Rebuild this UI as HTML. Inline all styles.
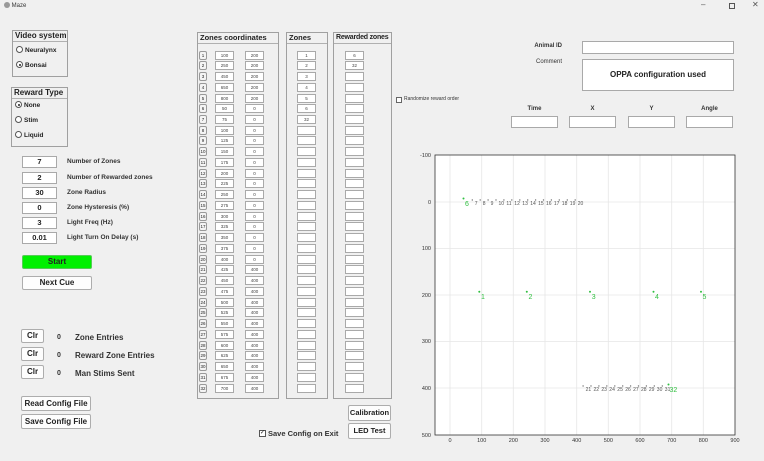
<!DOCTYPE html>
<html><head><meta charset="utf-8"><style>
*{box-sizing:border-box;margin:0;padding:0}
body{width:764px;height:461px;background:#f0f0f0;font-family:"Liberation Sans",sans-serif;position:relative;overflow:hidden;color:#222}
.a{position:absolute}
.tb{font-size:7px;color:#333}
.panel{position:absolute;border:1px solid #a0a0a0}
.ptitle{position:absolute;left:0;right:0;top:0;height:11px;border-bottom:1px solid #b0b0b0;font-weight:bold;font-size:8px;padding-left:2px;line-height:10px;white-space:nowrap;overflow:hidden}
.inp{position:absolute;background:#fff;border:1px solid #a9a9a9;text-align:center;font-weight:bold}
.lbl{position:absolute;font-size:6.5px;font-weight:bold;color:#333;white-space:nowrap}
.btn{position:absolute;background:#fdfdfd;border:1px solid #adadad;border-radius:2px;text-align:center;font-weight:bold;font-size:8px;white-space:nowrap}
.rad{position:absolute;font-size:6.5px;font-weight:bold;white-space:nowrap}
.rad i{display:inline-block;width:7px;height:7px;border:1px solid #555;border-radius:50%;vertical-align:-1px;margin-right:2px;background:#fff;position:relative}
.rad i.on::after{content:"";position:absolute;left:1.5px;top:1.5px;width:2px;height:2px;border-radius:50%;background:#222}
.rows{position:absolute;left:0;top:0}
.r{position:absolute;height:9px;font-size:4.5px;line-height:8px;text-align:center;background:#fff;border:1px solid #a9a9a9;color:#444}
.ix{position:absolute;height:9px;width:8px;font-size:4.5px;line-height:8px;text-align:center;border:1px solid #999;border-radius:2px;background:#f4f4f4}
</style></head><body>
<div class="a tb" style="left:4px;top:2px;font-size:6px"><span style="display:inline-block;width:6px;height:6px;border-radius:50%;background:#999;vertical-align:-1px"></span> Maze</div>
<div class="a" style="left:701px;top:0px;font-size:8px;color:#555">–</div>
<div class="a" style="left:729px;top:3px;width:6px;height:6px;border:1px solid #555"></div>
<div class="a" style="left:752px;top:0px;font-size:8px;color:#555">✕</div>

<div class="panel" style="left:12px;top:30px;width:56px;height:47px"><div class="ptitle" style="font-size:8px">Video system</div></div>
<div class="rad" style="left:16px;top:46px"><i></i>Neuralynx</div>
<div class="rad" style="left:16px;top:61px"><i class="on"></i>Bonsai</div>
<div class="panel" style="left:11px;top:87px;width:57px;height:60px"><div class="ptitle" style="font-size:8px">Reward Type</div></div>
<div class="rad" style="left:15px;top:101px"><i class="on"></i>None</div>
<div class="rad" style="left:15px;top:116px"><i></i>Stim</div>
<div class="rad" style="left:15px;top:131px"><i></i>Liquid</div>

<div class="inp" style="left:22px;top:156px;width:35px;height:12px;font-size:7.5px;line-height:10px">7</div><div class="lbl" style="left:67px;top:158px">Number of Zones</div>
<div class="inp" style="left:22px;top:172px;width:35px;height:12px;font-size:7.5px;line-height:10px">2</div><div class="lbl" style="left:67px;top:174px">Number of Rewarded zones</div>
<div class="inp" style="left:22px;top:187px;width:35px;height:12px;font-size:7.5px;line-height:10px">30</div><div class="lbl" style="left:67px;top:189px">Zone Radius</div>
<div class="inp" style="left:22px;top:202px;width:35px;height:12px;font-size:7.5px;line-height:10px">0</div><div class="lbl" style="left:67px;top:204px">Zone Hysteresis (%)</div>
<div class="inp" style="left:22px;top:217px;width:35px;height:12px;font-size:7.5px;line-height:10px">3</div><div class="lbl" style="left:67px;top:219px">Light Freq (Hz)</div>
<div class="inp" style="left:22px;top:232px;width:35px;height:12px;font-size:7.5px;line-height:10px">0.01</div><div class="lbl" style="left:67px;top:234px">Light Turn On Delay (s)</div>

<div class="btn" style="left:22px;top:255px;width:70px;height:14px;background:#00f000;border-color:#5c5;line-height:12px">Start</div>
<div class="btn" style="left:22px;top:276px;width:70px;height:14px;line-height:12px">Next Cue</div>
<div class="btn" style="left:21px;top:329px;width:23px;height:14px;line-height:11px">Clr</div>
<div class="btn" style="left:21px;top:347px;width:23px;height:14px;line-height:11px">Clr</div>
<div class="btn" style="left:21px;top:365px;width:23px;height:14px;line-height:11px">Clr</div>
<div class="lbl" style="left:57px;top:334px;font-size:7px">0</div><div class="lbl" style="left:75px;top:333px;font-size:8px">Zone Entries</div>
<div class="lbl" style="left:57px;top:352px;font-size:7px">0</div><div class="lbl" style="left:75px;top:351px;font-size:8px">Reward Zone Entries</div>
<div class="lbl" style="left:57px;top:370px;font-size:7px">0</div><div class="lbl" style="left:75px;top:369px;font-size:8px">Man Stims Sent</div>
<div class="btn" style="left:21px;top:396px;width:70px;height:15px;line-height:13px">Read Config File</div>
<div class="btn" style="left:21px;top:414px;width:70px;height:15px;line-height:13px">Save Config File</div>

<div class="panel" style="left:197px;top:32px;width:82px;height:367px"><div class="ptitle" style="font-size:7.5px">Zones coordinates</div></div>
<div class="panel" style="left:286px;top:32px;width:42px;height:367px"><div class="ptitle" style="font-size:7.5px">Zones</div></div>
<div class="panel" style="left:333px;top:32px;width:59px;height:367px"><div class="ptitle" style="font-size:7px;letter-spacing:-0.2px">Rewarded zones</div></div>

<div class="rows">
<div class="ix" style="left:199px;top:50.5px">1</div><div class="r" style="left:215px;top:50.5px;width:19px">100</div><div class="r" style="left:245px;top:50.5px;width:19px">200</div><div class="r" style="left:297px;top:50.5px;width:19px">1</div><div class="r" style="left:345px;top:50.5px;width:19px">6</div>
<div class="ix" style="left:199px;top:61.2px">2</div><div class="r" style="left:215px;top:61.2px;width:19px">250</div><div class="r" style="left:245px;top:61.2px;width:19px">200</div><div class="r" style="left:297px;top:61.2px;width:19px">2</div><div class="r" style="left:345px;top:61.2px;width:19px">32</div>
<div class="ix" style="left:199px;top:72px">3</div><div class="r" style="left:215px;top:72px;width:19px">450</div><div class="r" style="left:245px;top:72px;width:19px">200</div><div class="r" style="left:297px;top:72px;width:19px">3</div><div class="r" style="left:345px;top:72px;width:19px"></div>
<div class="ix" style="left:199px;top:82.7px">4</div><div class="r" style="left:215px;top:82.7px;width:19px">650</div><div class="r" style="left:245px;top:82.7px;width:19px">200</div><div class="r" style="left:297px;top:82.7px;width:19px">4</div><div class="r" style="left:345px;top:82.7px;width:19px"></div>
<div class="ix" style="left:199px;top:93.5px">5</div><div class="r" style="left:215px;top:93.5px;width:19px">800</div><div class="r" style="left:245px;top:93.5px;width:19px">200</div><div class="r" style="left:297px;top:93.5px;width:19px">5</div><div class="r" style="left:345px;top:93.5px;width:19px"></div>
<div class="ix" style="left:199px;top:104.2px">6</div><div class="r" style="left:215px;top:104.2px;width:19px">50</div><div class="r" style="left:245px;top:104.2px;width:19px">0</div><div class="r" style="left:297px;top:104.2px;width:19px">6</div><div class="r" style="left:345px;top:104.2px;width:19px"></div>
<div class="ix" style="left:199px;top:115px">7</div><div class="r" style="left:215px;top:115px;width:19px">75</div><div class="r" style="left:245px;top:115px;width:19px">0</div><div class="r" style="left:297px;top:115px;width:19px">32</div><div class="r" style="left:345px;top:115px;width:19px"></div>
<div class="ix" style="left:199px;top:125.7px">8</div><div class="r" style="left:215px;top:125.7px;width:19px">100</div><div class="r" style="left:245px;top:125.7px;width:19px">0</div><div class="r" style="left:297px;top:125.7px;width:19px"></div><div class="r" style="left:345px;top:125.7px;width:19px"></div>
<div class="ix" style="left:199px;top:136.4px">9</div><div class="r" style="left:215px;top:136.4px;width:19px">125</div><div class="r" style="left:245px;top:136.4px;width:19px">0</div><div class="r" style="left:297px;top:136.4px;width:19px"></div><div class="r" style="left:345px;top:136.4px;width:19px"></div>
<div class="ix" style="left:199px;top:147.2px">10</div><div class="r" style="left:215px;top:147.2px;width:19px">150</div><div class="r" style="left:245px;top:147.2px;width:19px">0</div><div class="r" style="left:297px;top:147.2px;width:19px"></div><div class="r" style="left:345px;top:147.2px;width:19px"></div>
<div class="ix" style="left:199px;top:157.9px">11</div><div class="r" style="left:215px;top:157.9px;width:19px">175</div><div class="r" style="left:245px;top:157.9px;width:19px">0</div><div class="r" style="left:297px;top:157.9px;width:19px"></div><div class="r" style="left:345px;top:157.9px;width:19px"></div>
<div class="ix" style="left:199px;top:168.7px">12</div><div class="r" style="left:215px;top:168.7px;width:19px">200</div><div class="r" style="left:245px;top:168.7px;width:19px">0</div><div class="r" style="left:297px;top:168.7px;width:19px"></div><div class="r" style="left:345px;top:168.7px;width:19px"></div>
<div class="ix" style="left:199px;top:179.4px">13</div><div class="r" style="left:215px;top:179.4px;width:19px">225</div><div class="r" style="left:245px;top:179.4px;width:19px">0</div><div class="r" style="left:297px;top:179.4px;width:19px"></div><div class="r" style="left:345px;top:179.4px;width:19px"></div>
<div class="ix" style="left:199px;top:190.1px">14</div><div class="r" style="left:215px;top:190.1px;width:19px">250</div><div class="r" style="left:245px;top:190.1px;width:19px">0</div><div class="r" style="left:297px;top:190.1px;width:19px"></div><div class="r" style="left:345px;top:190.1px;width:19px"></div>
<div class="ix" style="left:199px;top:200.9px">15</div><div class="r" style="left:215px;top:200.9px;width:19px">275</div><div class="r" style="left:245px;top:200.9px;width:19px">0</div><div class="r" style="left:297px;top:200.9px;width:19px"></div><div class="r" style="left:345px;top:200.9px;width:19px"></div>
<div class="ix" style="left:199px;top:211.6px">16</div><div class="r" style="left:215px;top:211.6px;width:19px">300</div><div class="r" style="left:245px;top:211.6px;width:19px">0</div><div class="r" style="left:297px;top:211.6px;width:19px"></div><div class="r" style="left:345px;top:211.6px;width:19px"></div>
<div class="ix" style="left:199px;top:222.4px">17</div><div class="r" style="left:215px;top:222.4px;width:19px">325</div><div class="r" style="left:245px;top:222.4px;width:19px">0</div><div class="r" style="left:297px;top:222.4px;width:19px"></div><div class="r" style="left:345px;top:222.4px;width:19px"></div>
<div class="ix" style="left:199px;top:233.1px">18</div><div class="r" style="left:215px;top:233.1px;width:19px">350</div><div class="r" style="left:245px;top:233.1px;width:19px">0</div><div class="r" style="left:297px;top:233.1px;width:19px"></div><div class="r" style="left:345px;top:233.1px;width:19px"></div>
<div class="ix" style="left:199px;top:243.8px">19</div><div class="r" style="left:215px;top:243.8px;width:19px">375</div><div class="r" style="left:245px;top:243.8px;width:19px">0</div><div class="r" style="left:297px;top:243.8px;width:19px"></div><div class="r" style="left:345px;top:243.8px;width:19px"></div>
<div class="ix" style="left:199px;top:254.6px">20</div><div class="r" style="left:215px;top:254.6px;width:19px">400</div><div class="r" style="left:245px;top:254.6px;width:19px">0</div><div class="r" style="left:297px;top:254.6px;width:19px"></div><div class="r" style="left:345px;top:254.6px;width:19px"></div>
<div class="ix" style="left:199px;top:265.3px">21</div><div class="r" style="left:215px;top:265.3px;width:19px">425</div><div class="r" style="left:245px;top:265.3px;width:19px">400</div><div class="r" style="left:297px;top:265.3px;width:19px"></div><div class="r" style="left:345px;top:265.3px;width:19px"></div>
<div class="ix" style="left:199px;top:276.1px">22</div><div class="r" style="left:215px;top:276.1px;width:19px">450</div><div class="r" style="left:245px;top:276.1px;width:19px">400</div><div class="r" style="left:297px;top:276.1px;width:19px"></div><div class="r" style="left:345px;top:276.1px;width:19px"></div>
<div class="ix" style="left:199px;top:286.8px">23</div><div class="r" style="left:215px;top:286.8px;width:19px">475</div><div class="r" style="left:245px;top:286.8px;width:19px">400</div><div class="r" style="left:297px;top:286.8px;width:19px"></div><div class="r" style="left:345px;top:286.8px;width:19px"></div>
<div class="ix" style="left:199px;top:297.5px">24</div><div class="r" style="left:215px;top:297.5px;width:19px">500</div><div class="r" style="left:245px;top:297.5px;width:19px">400</div><div class="r" style="left:297px;top:297.5px;width:19px"></div><div class="r" style="left:345px;top:297.5px;width:19px"></div>
<div class="ix" style="left:199px;top:308.3px">25</div><div class="r" style="left:215px;top:308.3px;width:19px">525</div><div class="r" style="left:245px;top:308.3px;width:19px">400</div><div class="r" style="left:297px;top:308.3px;width:19px"></div><div class="r" style="left:345px;top:308.3px;width:19px"></div>
<div class="ix" style="left:199px;top:319px">26</div><div class="r" style="left:215px;top:319px;width:19px">550</div><div class="r" style="left:245px;top:319px;width:19px">400</div><div class="r" style="left:297px;top:319px;width:19px"></div><div class="r" style="left:345px;top:319px;width:19px"></div>
<div class="ix" style="left:199px;top:329.8px">27</div><div class="r" style="left:215px;top:329.8px;width:19px">575</div><div class="r" style="left:245px;top:329.8px;width:19px">400</div><div class="r" style="left:297px;top:329.8px;width:19px"></div><div class="r" style="left:345px;top:329.8px;width:19px"></div>
<div class="ix" style="left:199px;top:340.5px">28</div><div class="r" style="left:215px;top:340.5px;width:19px">600</div><div class="r" style="left:245px;top:340.5px;width:19px">400</div><div class="r" style="left:297px;top:340.5px;width:19px"></div><div class="r" style="left:345px;top:340.5px;width:19px"></div>
<div class="ix" style="left:199px;top:351.2px">29</div><div class="r" style="left:215px;top:351.2px;width:19px">625</div><div class="r" style="left:245px;top:351.2px;width:19px">400</div><div class="r" style="left:297px;top:351.2px;width:19px"></div><div class="r" style="left:345px;top:351.2px;width:19px"></div>
<div class="ix" style="left:199px;top:362px">30</div><div class="r" style="left:215px;top:362px;width:19px">650</div><div class="r" style="left:245px;top:362px;width:19px">400</div><div class="r" style="left:297px;top:362px;width:19px"></div><div class="r" style="left:345px;top:362px;width:19px"></div>
<div class="ix" style="left:199px;top:372.7px">31</div><div class="r" style="left:215px;top:372.7px;width:19px">675</div><div class="r" style="left:245px;top:372.7px;width:19px">400</div><div class="r" style="left:297px;top:372.7px;width:19px"></div><div class="r" style="left:345px;top:372.7px;width:19px"></div>
<div class="ix" style="left:199px;top:383.5px">32</div><div class="r" style="left:215px;top:383.5px;width:19px">700</div><div class="r" style="left:245px;top:383.5px;width:19px">400</div><div class="r" style="left:297px;top:383.5px;width:19px"></div><div class="r" style="left:345px;top:383.5px;width:19px"></div>
</div>

<div class="btn" style="left:348px;top:405px;width:43px;height:16px;line-height:14px;font-size:7.5px">Calibration</div>
<div class="btn" style="left:348px;top:423px;width:43px;height:16px;line-height:14px;font-size:7.5px">LED Test</div>
<div class="a" style="left:259px;top:430px;width:7px;height:7px;border:1px solid #555;background:#fff;font-size:6px;line-height:5px;text-align:center">✓</div>
<div class="lbl" style="left:268px;top:429px;font-size:7.5px">Save Config on Exit</div>

<div class="lbl" style="left:520px;top:43px;width:42px;text-align:right;font-size:6px">Animal ID</div>
<div class="inp" style="left:582px;top:41px;width:152px;height:13px"></div>
<div class="lbl" style="left:520px;top:59px;width:42px;text-align:right;font-weight:normal;font-size:6px">Comment</div>
<div class="inp" style="left:582px;top:59px;width:152px;height:32px;font-size:8px;line-height:30px">OPPA configuration used</div>
<div class="a" style="left:396px;top:97px;width:6px;height:6px;border:1px solid #666;background:#fff"></div>
<div class="lbl" style="left:404px;top:96px;font-size:5px;font-weight:normal">Randomize reward order</div>
<div class="lbl" style="left:511px;top:106px;width:47px;text-align:center;font-size:6px">Time</div>
<div class="lbl" style="left:569px;top:106px;width:47px;text-align:center;font-size:6px">X</div>
<div class="lbl" style="left:628px;top:106px;width:47px;text-align:center;font-size:6px">Y</div>
<div class="lbl" style="left:686px;top:106px;width:47px;text-align:center;font-size:6px">Angle</div>
<div class="inp" style="left:511px;top:116px;width:47px;height:12px"></div>
<div class="inp" style="left:569px;top:116px;width:47px;height:12px"></div>
<div class="inp" style="left:628px;top:116px;width:47px;height:12px"></div>
<div class="inp" style="left:686px;top:116px;width:47px;height:12px"></div>

<svg class="a" style="left:0;top:0" width="764" height="461" font-family="Liberation Sans, sans-serif">
<rect x="435" y="155" width="300" height="280" fill="#fff"/>
<g stroke="#e6e6e6" stroke-width="0.8">
<line x1="450" y1="155" x2="450" y2="435"/><line x1="481.7" y1="155" x2="481.7" y2="435"/><line x1="513.3" y1="155" x2="513.3" y2="435"/><line x1="545" y1="155" x2="545" y2="435"/><line x1="576.7" y1="155" x2="576.7" y2="435"/><line x1="608.3" y1="155" x2="608.3" y2="435"/><line x1="640" y1="155" x2="640" y2="435"/><line x1="671.7" y1="155" x2="671.7" y2="435"/><line x1="703.3" y1="155" x2="703.3" y2="435"/>
<line x1="435" y1="202" x2="735" y2="202"/><line x1="435" y1="248.5" x2="735" y2="248.5"/><line x1="435" y1="295" x2="735" y2="295"/><line x1="435" y1="341.5" x2="735" y2="341.5"/><line x1="435" y1="388" x2="735" y2="388"/>
</g>
<rect x="435" y="155" width="300" height="280" fill="none" stroke="#333" stroke-width="0.8"/>
<g font-size="5.5" fill="#333" text-anchor="end">
<text x="431" y="157">-100</text><text x="431" y="204">0</text><text x="431" y="250">100</text><text x="431" y="297">200</text><text x="431" y="343">300</text><text x="431" y="390">400</text><text x="431" y="437">500</text>
</g>
<g font-size="5.5" fill="#333" text-anchor="middle">
<text x="450" y="442">0</text><text x="481.7" y="442">100</text><text x="513.3" y="442">200</text><text x="545" y="442">300</text><text x="576.7" y="442">400</text><text x="608.3" y="442">500</text><text x="640" y="442">600</text><text x="671.7" y="442">700</text><text x="703.3" y="442">800</text><text x="735" y="442">900</text>
</g>
<g fill="#555" font-size="5">
<text x="474.8" y="205">7</text><text x="482.7" y="205">8</text><text x="490.6" y="205">9</text><text x="498.5" y="205">10</text><text x="506.4" y="205">11</text><text x="514.3" y="205">12</text><text x="522.3" y="205">13</text><text x="530.2" y="205">14</text><text x="538.1" y="205">15</text><text x="546" y="205">16</text><text x="553.9" y="205">17</text><text x="561.8" y="205">18</text><text x="569.8" y="205">19</text><text x="577.7" y="205">20</text>
<text x="585.6" y="391">21</text><text x="593.5" y="391">22</text><text x="601.4" y="391">23</text><text x="609.3" y="391">24</text><text x="617.3" y="391">25</text><text x="625.2" y="391">26</text><text x="633.1" y="391">27</text><text x="641" y="391">28</text><text x="648.9" y="391">29</text><text x="656.8" y="391">30</text><text x="664.8" y="391">31</text>
</g>
<g fill="#777">
<circle cx="472.3" cy="200" r="0.7"/><circle cx="480.2" cy="200" r="0.7"/><circle cx="488.1" cy="200" r="0.7"/><circle cx="496" cy="200" r="0.7"/><circle cx="503.9" cy="200" r="0.7"/><circle cx="511.8" cy="200" r="0.7"/><circle cx="519.8" cy="200" r="0.7"/><circle cx="527.7" cy="200" r="0.7"/><circle cx="535.6" cy="200" r="0.7"/><circle cx="543.5" cy="200" r="0.7"/><circle cx="551.4" cy="200" r="0.7"/><circle cx="559.3" cy="200" r="0.7"/><circle cx="567.3" cy="200" r="0.7"/><circle cx="575.2" cy="200" r="0.7"/>
<circle cx="583.1" cy="386" r="0.7"/><circle cx="591" cy="386" r="0.7"/><circle cx="598.9" cy="386" r="0.7"/><circle cx="606.8" cy="386" r="0.7"/><circle cx="614.8" cy="386" r="0.7"/><circle cx="622.7" cy="386" r="0.7"/><circle cx="630.6" cy="386" r="0.7"/><circle cx="638.5" cy="386" r="0.7"/><circle cx="646.4" cy="386" r="0.7"/><circle cx="654.3" cy="386" r="0.7"/><circle cx="662.3" cy="386" r="0.7"/>
</g>
<g fill="#2fbf3f">
<circle cx="463.5" cy="198.5" r="1"/><circle cx="479.3" cy="291.7" r="1"/><circle cx="526.8" cy="291.7" r="1"/><circle cx="590" cy="291.7" r="1"/><circle cx="653.5" cy="291.7" r="1"/><circle cx="701" cy="291.7" r="1"/><circle cx="668.5" cy="384.5" r="1"/>
</g>
<g fill="#2fbf3f" font-size="7">
<text x="465" y="206">6</text><text x="481" y="299">1</text><text x="528.5" y="299">2</text><text x="591.8" y="299">3</text><text x="655" y="299">4</text><text x="702.5" y="299">5</text><text x="669.5" y="392">32</text>
</g>
</svg>
</body></html>
